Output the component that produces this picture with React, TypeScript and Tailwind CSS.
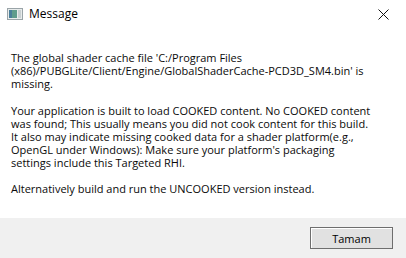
export default function App() {
  return (
    <div className="w-[406px] h-[258px] bg-white flex flex-col font-['Open_Sans',sans-serif] text-black overflow-hidden">
      <div className="h-[28px] flex items-center pl-[7px] pr-[12px]">
        <svg width="16" height="12" viewBox="0 0 16 12" className="mr-[6px]">
          <rect x="0.5" y="0.5" width="15" height="11" fill="#e8ecec" stroke="#9aa4a8" />
          <rect x="2" y="2" width="8" height="8" fill="#5f9c8c" />
          <rect x="2" y="2" width="3" height="8" fill="#4a7f9a" />
          <rect x="11" y="2" width="3" height="8" fill="#c9d0d2" />
        </svg>
        <span className="text-[12px] leading-none">Message</span>
        <svg width="11" height="11" viewBox="0 0 11 11" className="ml-auto mr-[5px]">
          <path d="M0.5 0.5 L10.5 10.5 M10.5 0.5 L0.5 10.5" stroke="#111" strokeWidth="1" />
        </svg>
      </div>
      <div className="flex-1 pl-[11px] pt-[23px] text-[11px] leading-[13px] text-[#0a0a0a]">
        <p>
          The global shader cache file 'C:/Program Files
          <br />
          (x86)/PUBGLite/Client/Engine/GlobalShaderCache-PCD3D_SM4.bin' is
          <br />
          missing.
        </p>
        <p className="mt-[14px]">
          Your application is built to load COOKED content. No COOKED content
          <br />
          was found; This usually means you did not cook content for this build.
          <br />
          It also may indicate missing cooked data for a shader platform(e.g.,
          <br />
          OpenGL under Windows): Make sure your platform's packaging
          <br />
          settings include this Targeted RHI.
        </p>
        <p className="mt-[13px]">Alternatively build and run the UNCOOKED version instead.</p>
      </div>
      <div className="h-[40px] bg-[#f0f0f0] flex items-center justify-end pr-[13px]">
        <button className="w-[83px] h-[22px] border border-[#6e6e6e] bg-[#e1e1e1] text-[11px] leading-none shadow-[inset_1px_1px_0_#fff]">
          Tamam
        </button>
      </div>
    </div>
  );
}
